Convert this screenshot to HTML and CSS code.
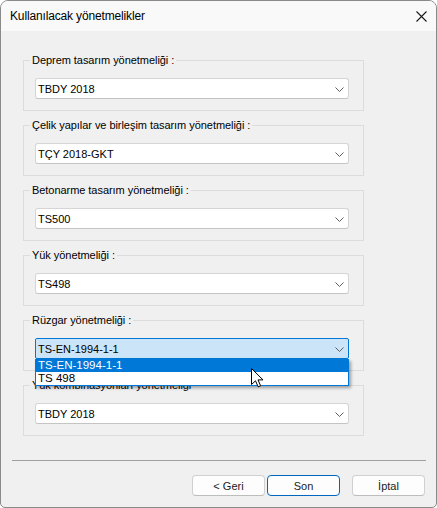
FILE: index.html
```html
<!DOCTYPE html>
<html>
<head>
	<meta charset="utf-8">
	<title>Kullanılacak yönetmelikler</title>
	<link rel="stylesheet" href="styles.css">
</head>
<body>
	<div class="window">
		<div class="titlebar">
			<span class="title">Kullanılacak yönetmelikler</span>
			<svg class="close" width="11" height="11" viewBox="0 0 11 11">
				<path d="M0.5 0.5 L10.5 10.5 M10.5 0.5 L0.5 10.5" stroke="#1b1b1b" stroke-width="1.1" fill="none"/>
			</svg>
		</div>

		<div class="content">
			<fieldset class="group">
				<legend>Deprem tasarım yönetmeliği :</legend>
				<div class="combo">
					<span>TBDY 2018</span>
					<svg class="chev" width="9" height="5" viewBox="0 0 9 5"><path d="M0.5 0.5 L4.5 4.5 L8.5 0.5" stroke="#5f5f5f" fill="none"/></svg>
				</div>
			</fieldset>

			<fieldset class="group">
				<legend>Çelik yapılar ve birleşim tasarım yönetmeliği :</legend>
				<div class="combo">
					<span>TÇY 2018-GKT</span>
					<svg class="chev" width="9" height="5" viewBox="0 0 9 5"><path d="M0.5 0.5 L4.5 4.5 L8.5 0.5" stroke="#5f5f5f" fill="none"/></svg>
				</div>
			</fieldset>

			<fieldset class="group">
				<legend>Betonarme tasarım yönetmeliği :</legend>
				<div class="combo">
					<span>TS500</span>
					<svg class="chev" width="9" height="5" viewBox="0 0 9 5"><path d="M0.5 0.5 L4.5 4.5 L8.5 0.5" stroke="#5f5f5f" fill="none"/></svg>
				</div>
			</fieldset>

			<fieldset class="group">
				<legend>Yük yönetmeliği :</legend>
				<div class="combo">
					<span>TS498</span>
					<svg class="chev" width="9" height="5" viewBox="0 0 9 5"><path d="M0.5 0.5 L4.5 4.5 L8.5 0.5" stroke="#5f5f5f" fill="none"/></svg>
				</div>
			</fieldset>

			<fieldset class="group">
				<legend>Rüzgar yönetmeliği :</legend>
				<div class="combo-wrap">
					<div class="combo open">
						<span>TS-EN-1994-1-1</span>
						<svg class="chev" width="9" height="5" viewBox="0 0 9 5"><path d="M0.5 0.5 L4.5 4.5 L8.5 0.5" stroke="#5f5f5f" fill="none"/></svg>
					</div>
					<ul class="droplist">
						<li class="selected">TS-EN-1994-1-1</li>
						<li>TS 498</li>
					</ul>
					<!-- fare imleci -->
					<svg class="cursor" width="13" height="20" viewBox="0 0 13 20">
						<path d="M0.5 0.5 L0.5 16.5 L4.5 12.8 L7.2 18.8 L9.6 17.8 L7 11.9 L12 11.9 Z" fill="#fff" stroke="#000" stroke-width="1" stroke-linejoin="miter"/>
					</svg>
				</div>
			</fieldset>

			<fieldset class="group">
				<legend>Yük kombinasyonları yönetmeliği</legend>
				<div class="combo">
					<span>TBDY 2018</span>
					<svg class="chev" width="9" height="5" viewBox="0 0 9 5"><path d="M0.5 0.5 L4.5 4.5 L8.5 0.5" stroke="#5f5f5f" fill="none"/></svg>
				</div>
			</fieldset>
		</div>

		<div class="footer">
			<div class="sep"></div>
			<div class="buttons">
				<button class="btn">&lt; Geri</button>
				<button class="btn default">Son</button>
				<button class="btn cancel">İptal</button>
			</div>
		</div>
	</div>
</body>
</html>
```

FILE: styles.css
```css
* {
	margin: 0;
	padding: 0;
	box-sizing: border-box;
}

body {
	background-color: #fff;
	font-family: "Liberation Sans", Arial, sans-serif;
	font-size: 11px;
	color: #000;
}

ul {
	list-style: none;
}

.window {
	width: 437px;
	height: 508px;
	border: 1px solid #8a8a8a;
	border-radius: 8px 8px 5px 5px;
	overflow: hidden;
	background-color: #f0f0f0;
	display: flex;
	flex-direction: column;
}

/* baslik cubugu */
.titlebar {
	height: 30px;
	background-color: #f9f9f9;
	display: flex;
	align-items: center;
	justify-content: space-between;
	padding: 0 9px 0 9px;
}

.title {
	font-size: 12px;
	letter-spacing: -0.15px;
	color: #000;
}

.content {
	padding: 22px 0 0 22px;
	display: flex;
	flex-direction: column;
	gap: 7px;
}

/* grup kutulari */
.group {
	width: 341px;
	border: 1px solid #dcdcdc;
	padding: 11px 14px 11px 11px;
	min-inline-size: 0;
}

.group legend {
	margin-left: -5px;
	padding: 0 2px;
	line-height: 14px;
	font-size: 11px;
	letter-spacing: -0.05px;
}

.combo {
	width: 314px;
	height: 21px;
	background-color: #fff;
	border: 1px solid #d5d5d5;
	border-bottom-color: #c4c4c4;
	border-radius: 3px;
	display: flex;
	align-items: center;
	justify-content: space-between;
	padding: 0 4px 0 2px;
}

.combo .chev {
	margin-top: 1px;
}

.combo.open {
	background-color: #cce4f7;
	border-color: #0078d7;
	border-radius: 2px;
}

.combo-wrap {
	position: relative;
}

.droplist {
	position: absolute;
	left: 0;
	top: 21px;
	width: 314px;
	background-color: #fff;
	border: 1px solid #0078d7;
	border-top: 0;
	box-shadow: 2px 2px 3px rgba(0, 0, 0, 0.35);
	z-index: 2;
}

.droplist li {
	height: 13px;
	line-height: 13px;
	padding-left: 2px;
	font-size: 11.5px;
}

.droplist .selected {
	background-color: #0078d7;
	color: #fff;
}

.cursor {
	position: absolute;
	left: 216px;
	top: 30px;
	z-index: 3;
}

/* alt kisim */
.footer {
	margin-top: 24px;
	padding: 0 10px 0 11px;
}

.sep {
	height: 1px;
	background-color: #a0a0a0;
}

.buttons {
	margin-top: 14px;
	padding-right: 1px;
	display: flex;
	justify-content: flex-end;
	gap: 2px;
}

.btn {
	width: 73px;
	height: 21px;
	font-family: "Liberation Sans", Arial, sans-serif;
	font-size: 11px;
	color: #1b1b1b;
	background-color: #fdfdfd;
	border: 1px solid #d0d0d0;
	border-bottom-color: #bdbdbd;
	border-radius: 4px;
}

.btn.default {
	border-color: #0067c0;
}

.btn.cancel {
	margin-left: 10px;
}
```
